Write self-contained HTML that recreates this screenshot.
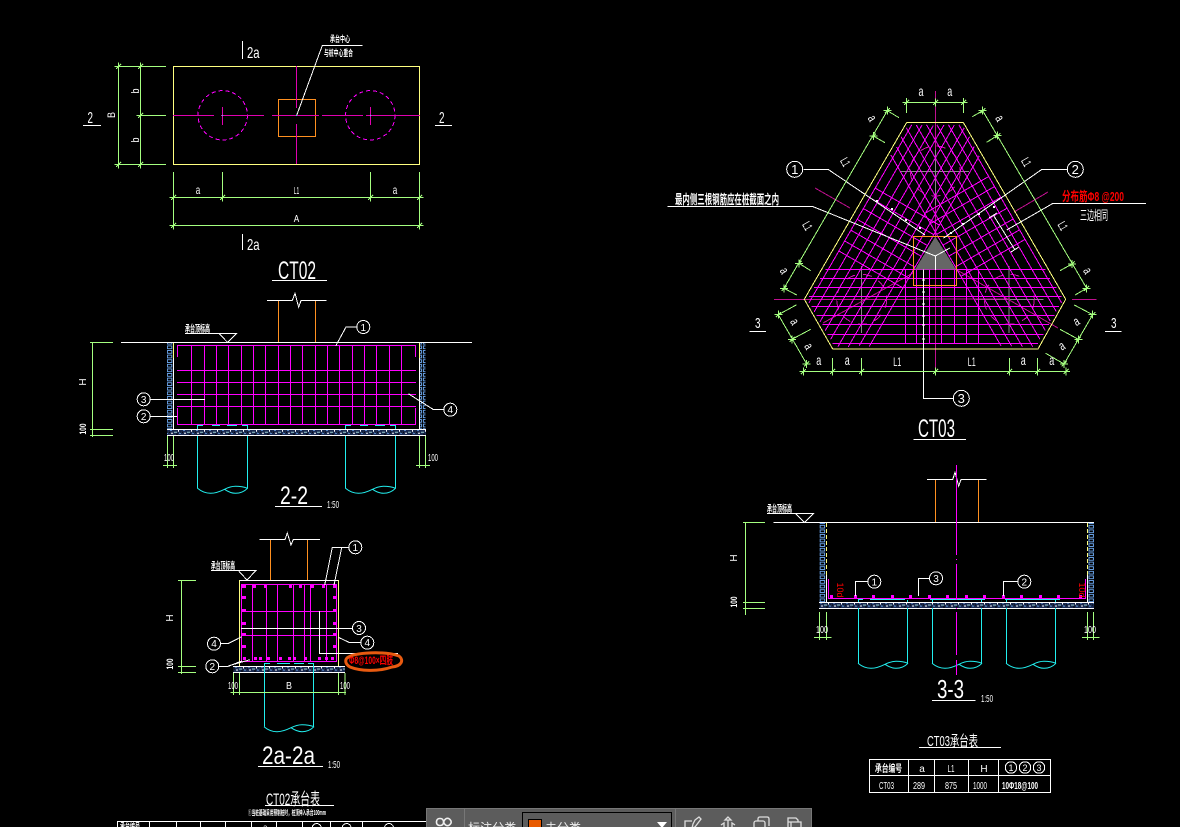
<!DOCTYPE html>
<html lang="zh"><head><meta charset="utf-8"><title>CT02 CT03</title>
<style>
html,body{margin:0;padding:0;background:#000;width:1180px;height:827px;overflow:hidden}
svg{position:absolute;left:0;top:0;display:block}
.t{fill:#fff;font-family:"Liberation Sans","Noto Sans CJK SC",sans-serif;stroke:none}
.c{fill:#fff;font-family:"Liberation Sans","Noto Sans CJK SC",sans-serif;font-weight:bold;stroke:none}
.r{fill:#f00}
.m{text-anchor:middle}
#tb{position:absolute;left:426px;top:808px;width:386px;height:19px;background:#5c5c5c;border:1px solid #777;border-bottom:0;box-sizing:border-box;overflow:hidden;font:14px "Liberation Sans","Noto Sans CJK SC",sans-serif;color:#eee}
#tb div,#tb span,#tb svg{position:absolute}
</style></head><body>
<svg width="1180" height="827" viewBox="0 0 1180 827" fill="none" stroke-width="1" shape-rendering="crispEdges">
<defs>
<path id="k" d="M-4 0H4M0-4V4M-2.5 2.5L2.5-2.5" stroke="#a5ff80"/>
<path id="wv" d="M0 0Q6 5 13 5Q19 5 27 1Q33-2 38-2Q45-2 50 0M27 1Q33 5 38 5Q45 5 50 0" stroke="#2ee" shape-rendering="auto"/>
<pattern id="bk" width="6.4" height="4.6" patternUnits="userSpaceOnUse"><rect width="6.4" height="4.6" fill="#000"/><rect x=".8" y=".8" width="4.4" height="3" fill="none" stroke="#6aa4ea"/></pattern>
<pattern id="gr" width="13" height="6.4" patternUnits="userSpaceOnUse"><rect width="13" height="6.4" fill="#1a2a50"/><rect x="1" y="1" width="2" height="1" fill="#6aa4ea"/><rect x="5" y="3" width="3" height="1" fill="#9cc"/><rect x="9" y="1" width="1" height="2" fill="#fff"/><rect x="2" y="4" width="2" height="1" fill="#fff"/><rect x="10" y="4" width="2" height="1" fill="#6aa4ea"/><rect x="6" y="0" width="1" height="1" fill="#000"/><rect x="0" y="3" width="1" height="1" fill="#000"/><rect x="11" y="3" width="1" height="1" fill="#000"/><rect x="7" y="5" width="2" height="1" fill="#000"/></pattern>
<g id="rb">
<path stroke="#f0f" d="M825.7 269.5H1045.7M820 278.5H1050M814 287.5H1056.7M809 296.5H1061.7M811.7 306.5H1059M816.7 315.5H1054.3M822.3 324.5H1049M827.7 334.5H1043.3M832.7 343.5H1038"/>
<path stroke="#f0f" d="M905.7 269V343M916.7 269V343M929.3 269V343M941.7 269V343M954.3 269V343M966.7 269V343M978.3 269V343"/>
</g>
<g id="px">
<path stroke="#888" d="M827.7 299.5H895.7M861.5 266V333"/>
<circle cx="861.7" cy="299.3" r="25" stroke="#d010b0" stroke-dasharray="9 8"/>
</g>
</defs>

<!-- CT02 plan -->
<rect x="173.5" y="66.5" width="246" height="98" stroke="#ffff80"/>
<circle cx="222.7" cy="115.3" r="24.7" stroke="#f0f" stroke-dasharray="4 3"/>
<circle cx="370.3" cy="115.3" r="24.7" stroke="#f0f" stroke-dasharray="4 3"/>
<rect x="278.5" y="99.5" width="37" height="37" stroke="#ff9020"/>
<path stroke="#e000b0" d="M296.5 66V108M296.5 124V164M173 115.5H214M221 115.5H264M272 115.5H319M322 115.5H363M366 115.5H420M222.5 107V125M370.5 107V125"/>
<path stroke="#fff" d="M296.7 115.3L322.3 45.5H362.7"/>
<rect x="222" y="115" width="1" height="1" fill="#2ee"/><rect x="370" y="115" width="1" height="1" fill="#2ee"/><rect x="296" y="115" width="1" height="1" fill="#2ee"/>
<text class="c" x="330" y="42" font-size="8.5" textLength="20" lengthAdjust="spacingAndGlyphs">承台中心</text>
<text class="c" x="324" y="56" font-size="8.5" textLength="29" lengthAdjust="spacingAndGlyphs">与桩中心重合</text>
<path stroke="#a5ff80" d="M118.5 64V167M140.5 64V167M115 66.5H166M115 164.5H166M140 115.5H166M170 197.5H422M170 225.5H422M173.5 172V228M222.5 172V200M370.5 172V200M419.5 172V228"/>
<g><use href="#k" x="118.5" y="66.5"/><use href="#k" x="140.5" y="66.5"/><use href="#k" x="118.5" y="164.5"/><use href="#k" x="140.5" y="164.5"/><use href="#k" x="140.5" y="115.5"/><use href="#k" x="173.5" y="197.5"/><use href="#k" x="222.5" y="197.5"/><use href="#k" x="370.5" y="197.5"/><use href="#k" x="419.5" y="197.5"/><use href="#k" x="173.5" y="225.5"/><use href="#k" x="419.5" y="225.5"/></g>
<path stroke="#fff" d="M242.5 41V59M242.5 234V250M83 125.5H101M435 125.5H452"/>
<text class="t" x="247" y="58" font-size="16" textLength="12.6" lengthAdjust="spacingAndGlyphs">2a</text>
<text class="t" x="247" y="250" font-size="16" textLength="12.6" lengthAdjust="spacingAndGlyphs">2a</text>
<text class="t" x="87.5" y="123" font-size="16" textLength="5.5" lengthAdjust="spacingAndGlyphs">2</text>
<text class="t" x="439" y="123" font-size="16" textLength="5.5" lengthAdjust="spacingAndGlyphs">2</text>
<text class="t m" x="111" y="119" font-size="11" textLength="6" lengthAdjust="spacingAndGlyphs" transform="rotate(-90 111 115)">B</text>
<text class="t m" x="136" y="94" font-size="11" textLength="5" lengthAdjust="spacingAndGlyphs" transform="rotate(-90 136 91)">b</text>
<text class="t m" x="136" y="143" font-size="11" textLength="5" lengthAdjust="spacingAndGlyphs" transform="rotate(-90 136 140)">b</text>
<text class="t m" x="198" y="194" font-size="12" textLength="4.5" lengthAdjust="spacingAndGlyphs">a</text>
<text class="t m" x="296.5" y="194" font-size="10" textLength="5.5" lengthAdjust="spacingAndGlyphs">L1</text>
<text class="t m" x="395" y="194" font-size="12" textLength="4.5" lengthAdjust="spacingAndGlyphs">a</text>
<text class="t m" x="296.5" y="222" font-size="10" textLength="5.5" lengthAdjust="spacingAndGlyphs">A</text>
<text class="t" x="278" y="279" font-size="25" textLength="38" lengthAdjust="spacingAndGlyphs">CT02</text>
<path stroke="#fff" d="M272 280.5H327"/>

<!-- 2-2 -->
<path stroke="#ff9020" d="M278.5 300V342M315.5 300V342"/>
<path stroke="#fff" d="M267 300.5H292.3L295 293.3L298.7 307.3L301 300.5H326.7M121 342.5H472M185 333.5H236.7L227.7 342.5L219 333.5"/>
<text class="c" x="185" y="332" font-size="9.5" textLength="25" lengthAdjust="spacingAndGlyphs">承台顶标高</text>
<rect x="167" y="343" width="6" height="86" fill="url(#bk)"/><rect x="419.5" y="343" width="6" height="86" fill="url(#bk)"/>
<path stroke="#fff" d="M173.5 358V435M419.5 358V435"/><path stroke="#ffff80" d="M173.5 343V358M419.5 343V358"/>
<rect x="167" y="429" width="259" height="6" fill="url(#gr)"/>
<path stroke="#fff" d="M167 429.5H426M167 435.5H426"/>
<path stroke="#f0f" d="M177.5 345.5H415.5M177.5 424.5H415.5M177.5 345V357M177.5 408V425M415.5 345V357M415.5 408V425M177 370.5H416M177 382.5H416M177 394.5H416M177 406.5H416"/>
<path stroke="#f0f" d="M191.5 345V424M204.5 345V424M216.5 345V424M228.5 345V424M241.5 345V424M253.5 345V424M265.5 345V424M278.5 345V424M290.5 345V424M302.5 345V424M315.5 345V424M327.5 345V424M339.5 345V424M352.5 345V424M364.5 345V424M376.5 345V424M389.5 345V424M401.5 345V424"/>
<path stroke="#2ee" d="M197.5 429V425.5H203M212 425.5H220M227 425.5H237M242 425.5H247.5V429M345.5 429V425.5H351M360 425.5H368M375 425.5H385M390 425.5H395.5V429M197.5 436V488.3M247.5 436V488.3M345.5 436V488.3M395.5 436V488.3"/>
<use href="#wv" x="197.5" y="488.3"/><use href="#wv" x="345.5" y="488.3"/>
<circle cx="363.3" cy="327" r="6.5" stroke="#fff"/><path stroke="#fff" d="M356.7 327H346L335.7 346"/>
<circle cx="143.7" cy="399.3" r="6.5" stroke="#fff"/><path stroke="#fff" d="M150 399.5H205"/>
<circle cx="143.7" cy="416.3" r="6.5" stroke="#fff"/><path stroke="#fff" d="M150 416.5H177"/>
<circle cx="450.3" cy="409.7" r="6.5" stroke="#fff"/><path stroke="#fff" d="M444 409.5H433.3L408.3 393.7"/>
<text class="t m" x="363.3" y="331" font-size="10">1</text><text class="t m" x="143.7" y="403" font-size="10">3</text><text class="t m" x="143.7" y="420" font-size="10">2</text><text class="t m" x="450.3" y="413" font-size="10">4</text>
<path stroke="#a5ff80" d="M92.5 342V437M90 342.5H113M90 429.5H113M90 435.5H113M167.5 436V468M173.5 436V468M163 465.5H177M419.5 436V468M425.5 436V468M416 465.5H430"/>
<text class="t m" x="90" y="386" font-size="10" transform="rotate(-90 86 386)">H</text>
<text class="c m" x="89" y="432" font-size="9.5" transform="rotate(-90 86 432)" textLength="11" lengthAdjust="spacingAndGlyphs">100</text>
<text class="t" x="164" y="461" font-size="10" textLength="10" lengthAdjust="spacingAndGlyphs">100</text>
<text class="t" x="428" y="461" font-size="10" textLength="10" lengthAdjust="spacingAndGlyphs">100</text>
<text class="t" x="280" y="504" font-size="25" textLength="28" lengthAdjust="spacingAndGlyphs">2-2</text>
<path stroke="#fff" d="M275 506.5H322"/>
<text class="t" x="327" y="508" font-size="10" textLength="12" lengthAdjust="spacingAndGlyphs">1:50</text>

<!-- 2a-2a -->
<path stroke="#ff9020" d="M270.5 539V580M307.5 539V580"/>
<path stroke="#fff" d="M259.3 539.5H285L287.3 533L291 545L293.3 539.5H320M239.5 580.5H338.5M211 570.5H256L247 580L238.3 570.5"/>
<text class="c" x="211" y="569" font-size="9.5" textLength="24" lengthAdjust="spacingAndGlyphs">承台顶标高</text>
<path stroke="#ffff80" d="M239.5 580V666M338.5 580V666"/>
<path stroke="#f0f" d="M241.5 584.5H336.5M241.5 661.5H336.5M241.5 584V662M336.5 584V662M252.5 584V661M266.5 584V661M277.5 584V661M293.5 584V661M304.5 584V661M310.5 584V661M326.5 584V661M241 611.5H337M241 635.5H337"/>
<path fill="#f0f" d="M242 585h4v3h-4zM253 585h3v3h-3zM264 585h3v3h-3zM289 585h3v3h-3zM299 585h3v3h-3zM311 585h3v3h-3zM322 585h3v3h-3zM333 585h3v3h-3zM243 657h3v3h-3zM254 657h3v3h-3zM259 657h3v3h-3zM267 657h3v3h-3zM279 657h3v3h-3zM288 657h3v3h-3zM293 657h3v3h-3zM304 657h3v3h-3zM318 657h3v3h-3zM325 657h3v3h-3zM331 657h3v3h-3zM242 596h4v3h-4zM242 609h4v3h-4zM242 622h4v3h-4zM242 633h4v3h-4zM242 645h4v3h-4zM333 596h4v3h-4zM333 609h4v3h-4zM333 622h4v3h-4zM333 633h4v3h-4zM333 645h4v3h-4z"/>
<path stroke="#fff" d="M241 628.5H353M319.5 611V653.5H398"/>
<circle cx="355.3" cy="547.3" r="6.5" stroke="#fff"/><path stroke="#fff" d="M349 547.5H332.3L324.7 585M341.7 547.5L334 585"/>
<circle cx="359" cy="628" r="6.5" stroke="#fff"/>
<circle cx="367.3" cy="642.7" r="6.5" stroke="#fff"/><path stroke="#fff" d="M361 642.5H349.3L338.3 637.3"/>
<circle cx="214" cy="643.7" r="6.5" stroke="#fff"/><path stroke="#fff" d="M220.7 643.5H228.3L241.7 636.7"/>
<circle cx="212.3" cy="666.3" r="6.5" stroke="#fff"/><path stroke="#fff" d="M218 666.5H228L241.7 661M228 666L250 659.7"/>
<text class="t m" x="355.3" y="551" font-size="10">1</text><text class="t m" x="359" y="632" font-size="10">3</text><text class="t m" x="367.3" y="646" font-size="10">4</text><text class="t m" x="214" y="647" font-size="10">4</text><text class="t m" x="212.3" y="670" font-size="10">2</text>
<rect x="233.3" y="666.3" width="111.7" height="6.4" fill="url(#gr)"/>
<path stroke="#fff" d="M233 666.5H345M233 672.5H345"/>
<path stroke="#2ee" d="M264.5 673V663.5H270M277 663.5H290M294 663.5H304M308 663.5H313.5V673M264.5 673V726.7M313.5 673V726.7"/>
<use href="#wv" x="264" y="726.7"/>
<path stroke="#a5ff80" d="M181.5 580V674M178 580.5H196M178 666.5H196M178 672.5H196M230.7 692.5H346M233.5 673V695M239.5 673V695M338.5 673V695M345 673V695"/>
<text class="t m" x="177" y="622" font-size="10" transform="rotate(-90 173 622)">H</text>
<text class="c m" x="177" y="668" font-size="9.5" transform="rotate(-90 173 668)" textLength="11" lengthAdjust="spacingAndGlyphs">100</text>
<text class="t" x="228" y="689" font-size="10" textLength="10" lengthAdjust="spacingAndGlyphs">100</text>
<text class="t" x="340" y="689" font-size="10" textLength="10" lengthAdjust="spacingAndGlyphs">100</text>
<text class="t m" x="289" y="689" font-size="10" textLength="6" lengthAdjust="spacingAndGlyphs">B</text>
<text class="t" x="262" y="764" font-size="25" textLength="53" lengthAdjust="spacingAndGlyphs">2a-2a</text>
<path stroke="#fff" d="M258 766.5H323"/>
<text class="t" x="328" y="768" font-size="10" textLength="12" lengthAdjust="spacingAndGlyphs">1:50</text>
<path d="M347 658C355 652 385 651 399 656C404 660 402 666 392 667C378 672 360 671 350 667C345 664 345 660 347 658Z" stroke="#e85a10" stroke-width="3" shape-rendering="auto"/>
<text class="c r" x="349" y="664" font-size="11" textLength="44" lengthAdjust="spacingAndGlyphs">Φ8@100×四肢</text>

<!-- CT02 table -->
<text class="t" x="266" y="805" font-size="17" textLength="54" lengthAdjust="spacingAndGlyphs">CT02承台表</text>
<path stroke="#fff" d="M265 805.5H334"/>
<text class="c" x="248" y="815" font-size="7" textLength="78" lengthAdjust="spacingAndGlyphs">①当桩基础采用预制桩时，桩顶伸入承台100mm</text>
<path stroke="#fff" d="M117 821.5H427M117.5 822V827M149.5 822V827M176.5 822V827M200.5 822V827M225.5 822V827M251.5 822V827M276.5 822V827M302.5 822V827M330.5 822V827M362.5 822V827"/>
<circle cx="316.7" cy="828" r="4.5" stroke="#fff"/><circle cx="346.6" cy="828" r="4.5" stroke="#fff"/><circle cx="389" cy="828" r="4.5" stroke="#fff"/>
<text class="c" x="120" y="829" font-size="8" textLength="20" lengthAdjust="spacingAndGlyphs">承台编号</text>
<text class="t" x="263" y="830" font-size="8">a</text>

<!-- CT03 plan -->
<path stroke="#c01090" d="M935.5 91V373"/>
<use href="#px"/>
<g transform="translate(147.6 0)"><use href="#px"/></g>
<path stroke="#888" d="M901 171.5H969M935.5 150V205"/><circle cx="935.3" cy="171" r="25" stroke="#d010b0" stroke-dasharray="9 8"/>
<path stroke="#c01090" d="M774 299.5H915M1072 299.5H1096.7M815 188L850 208M1014 212L1048 192M823 323L913 273M957 270L1058 328M915 299H1010"/>
<use href="#rb"/>
<use href="#rb" transform="rotate(120 935.3 257)"/>
<use href="#rb" transform="rotate(240 935.3 257)"/>
<path fill="#666" d="M935.3 236.7L956 269.3H915Z"/>
<rect x="913.5" y="236.5" width="43" height="49" stroke="#ff9020"/>
<path stroke="#ffff80" d="M906.7 122.5H963.3L1065.7 299.3L1038 349H832.7L804.3 299.3Z" stroke-linejoin="miter"/>
<path stroke="#fff" d="M803.3 169.5H828.3L925 235M1067.3 169.5H1041.7L943.3 238.3M667.3 206.5H812.7L935.3 256M1052.7 203.5H1146M1052.7 203.5L1006.7 230M993.3 215L1015 250M989 218L997 213M1011 252L1019 247M935.5 256V270M935.3 256L950 248M923.5 269.3V398.5H953.3"/>
<path fill="#fff" d="M876 200h2v2h-2zM891 208h2v2h-2zM905 219h2v2h-2zM919 227h2v2h-2zM993 206h2v2h-2zM978 213h2v2h-2zM962 223h2v2h-2zM950 232h2v2h-2zM922.5 279h2v2h-2zM922.5 291h2v2h-2zM922.5 303h2v2h-2zM922.5 315h2v2h-2zM922.5 324h2v2h-2zM922.5 338h2v2h-2z"/>
<circle cx="794.7" cy="169.3" r="8" stroke="#fff"/><circle cx="1075.3" cy="169.3" r="8" stroke="#fff"/><circle cx="961.3" cy="398.3" r="8" stroke="#fff"/>
<text class="t m" x="794.7" y="174" font-size="13">1</text><text class="t m" x="1075.3" y="174" font-size="13">2</text><text class="t m" x="961.3" y="403" font-size="13">3</text>
<text class="c" x="675" y="204" font-size="13" textLength="104" lengthAdjust="spacingAndGlyphs">最内侧三根钢筋应在桩截面之内</text>
<text class="c r" x="1062" y="201" font-size="13" textLength="62" lengthAdjust="spacingAndGlyphs">分布筋Φ8 @200</text>
<text class="t" x="1080" y="220" font-size="13" textLength="28" lengthAdjust="spacingAndGlyphs">三边相同</text>
<path stroke="#a5ff80" d="M803.3 371.5H1067.3M832.5 358V374M861.5 358V374M1009.5 358V374M1037.5 358V374M902.3 102.5H967.3M906.5 98V113M963.5 98V113M784 288.3L887.3 110.7M873.3 136L885 142.7M887.3 110.7L899 117.7M799 263.3L810.7 270.7M784 288.3L796.7 295M982.7 110.7L1086.7 288.3M982.7 110.7L972.3 116.7M997 135.7L986.7 142.3M1072 264L1060 270.7M1086.7 288.3L1075 295M778.3 314.7L806.7 364M778.3 314.7L796.7 304.7M792 339.3L810.7 329.3M1092.7 314.7L1064 364M1092.7 314.7L1074.3 305M1078.3 339.3L1060 329.3M1064 364L1045.7 353.3"/>
<g><use href="#k" x="803.3" y="371.5"/><use href="#k" x="832.5" y="371.5"/><use href="#k" x="861.5" y="371.5"/><use href="#k" x="935.5" y="371.5"/><use href="#k" x="1009.5" y="371.5"/><use href="#k" x="1037.5" y="371.5"/><use href="#k" x="1066" y="371.5"/><use href="#k" x="906.5" y="102.5"/><use href="#k" x="935.5" y="102.5"/><use href="#k" x="963.5" y="102.5"/><use href="#k" x="887.3" y="110.7"/><use href="#k" x="873.3" y="136"/><use href="#k" x="799" y="263.3"/><use href="#k" x="784" y="288.3"/><use href="#k" x="982.7" y="110.7"/><use href="#k" x="997.7" y="135.7"/><use href="#k" x="1072" y="264"/><use href="#k" x="1086.7" y="288.3"/><use href="#k" x="778.3" y="314.7"/><use href="#k" x="792" y="339.3"/><use href="#k" x="806.7" y="364"/><use href="#k" x="1092.7" y="314.7"/><use href="#k" x="1078.3" y="339.3"/><use href="#k" x="1064" y="364"/></g>
<g font-size="14">
<text class="t m" x="818.7" y="365" textLength="5" lengthAdjust="spacingAndGlyphs">a</text><text class="t m" x="847.3" y="365" textLength="5" lengthAdjust="spacingAndGlyphs">a</text><text class="t m" x="1023.3" y="365" textLength="5" lengthAdjust="spacingAndGlyphs">a</text><text class="t m" x="1051.7" y="365" textLength="5" lengthAdjust="spacingAndGlyphs">a</text>
<text class="t m" x="897.3" y="366" font-size="12" textLength="8" lengthAdjust="spacingAndGlyphs">L1</text><text class="t m" x="971.7" y="366" font-size="12" textLength="8" lengthAdjust="spacingAndGlyphs">L1</text>
<text class="t m" x="921" y="96" textLength="5" lengthAdjust="spacingAndGlyphs">a</text><text class="t m" x="949.7" y="96" textLength="5" lengthAdjust="spacingAndGlyphs">a</text>
<text class="t m" x="871.7" y="122" font-size="13" textLength="5" lengthAdjust="spacingAndGlyphs" transform="rotate(60 871.7 118.5)">a</text>
<text class="t m" x="845" y="166" font-size="12" textLength="8" lengthAdjust="spacingAndGlyphs" transform="rotate(60 845 162.3)">L1</text>
<text class="t m" x="807.3" y="230" font-size="12" textLength="8" lengthAdjust="spacingAndGlyphs" transform="rotate(60 807.3 226)">L1</text>
<text class="t m" x="783.7" y="274.5" font-size="13" textLength="5" lengthAdjust="spacingAndGlyphs" transform="rotate(60 783.7 271)">a</text>
<text class="t m" x="999" y="122" font-size="13" textLength="5" lengthAdjust="spacingAndGlyphs" transform="rotate(60 999 118.7)">a</text>
<text class="t m" x="1026" y="166" font-size="12" textLength="8" lengthAdjust="spacingAndGlyphs" transform="rotate(60 1026 162.3)">L1</text>
<text class="t m" x="1062.7" y="230" font-size="12" textLength="8" lengthAdjust="spacingAndGlyphs" transform="rotate(60 1062.7 226)">L1</text>
<text class="t m" x="1087" y="274.5" font-size="13" textLength="5" lengthAdjust="spacingAndGlyphs" transform="rotate(60 1087 271)">a</text>
<text class="t m" x="794" y="325.5" font-size="13" textLength="5" lengthAdjust="spacingAndGlyphs" transform="rotate(60 794 322)">a</text>
<text class="t m" x="808" y="350" font-size="13" textLength="5" lengthAdjust="spacingAndGlyphs" transform="rotate(60 808 346.7)">a</text>
<text class="t m" x="1076.7" y="325.5" font-size="13" textLength="5" lengthAdjust="spacingAndGlyphs" transform="rotate(-30 1076.7 322)">a</text>
<text class="t m" x="1062.3" y="350" font-size="13" textLength="5" lengthAdjust="spacingAndGlyphs" transform="rotate(-30 1062.3 346.7)">a</text>
</g>
<text class="t" x="755" y="328" font-size="15" textLength="5.5" lengthAdjust="spacingAndGlyphs">3</text>
<text class="t" x="1111" y="328" font-size="15" textLength="5.5" lengthAdjust="spacingAndGlyphs">3</text>
<path stroke="#fff" d="M749.3 331.5H766M1105 331.5H1121.7M913.3 439.5H966"/>
<text class="t" x="918" y="437" font-size="25" textLength="37" lengthAdjust="spacingAndGlyphs">CT03</text>

<!-- 3-3 -->
<path stroke="#ff9020" d="M935.5 479V522M978.5 479V522"/>
<path stroke="#fff" d="M927 479.5H952.7L955 472.3L958.7 486L961 479.5H986.7M773.3 522.5H1094M767 513.5H813.7L804.7 522.5L795.7 513.5"/>
<text class="c" x="767" y="512" font-size="9.5" textLength="25" lengthAdjust="spacingAndGlyphs">承台顶标高</text>
<rect x="819.5" y="523" width="6.4" height="79" fill="url(#bk)"/><rect x="1087.5" y="523" width="6.4" height="79" fill="url(#bk)"/>
<path stroke="#ffff80" stroke-dasharray="4 2" d="M826.5 523V602M1087.5 523V602"/>
<path stroke="#fff" d="M826.5 575V608M1087.5 575V608"/>
<rect x="819.3" y="602.3" width="274.7" height="6" fill="url(#gr)"/>
<path stroke="#fff" d="M819 602.5H1094M819 608.5H1094"/>
<path stroke="#2ee" d="M858.5 608V663.3M907.5 608V663.3M932.5 608V663.3M981.5 608V663.3M1006.5 608V663.3M1055.5 608V663.3M858 599.5H863M870 599.5H905M930 599.5H985M1005 599.5H1060M858.5 600V602M907.5 600V602M932.5 600V602M981.5 600V602M1006.5 600V602M1055.5 600V602"/>
<use href="#wv" x="858" y="663.3"/><use href="#wv" x="932" y="663.3"/><use href="#wv" x="1006" y="663.3"/>
<path stroke="#f0f" d="M956.5 465V555M956.5 559V560M956.5 564V600M956.5 608V609M956.5 612V655M956.5 660V675"/>
<path stroke="#f0f" d="M828.5 579V598.5H1085.5V579"/>
<path fill="#f0f" d="M830 595h3v3h-3zM854 595h3v3h-3zM872 595h3v3h-3zM891 595h3v3h-3zM909 595h3v3h-3zM928 595h3v3h-3zM946 595h3v3h-3zM965 595h3v3h-3zM983 595h3v3h-3zM1002 595h3v3h-3zM1020 595h3v3h-3zM1039 595h3v3h-3zM1057 595h3v3h-3zM1079 595h3v3h-3z"/>
<circle cx="874.3" cy="581.7" r="6.5" stroke="#fff"/><path stroke="#fff" d="M868 581.5H855.5V596"/>
<circle cx="936" cy="578.3" r="6.5" stroke="#fff"/><path stroke="#fff" d="M929.5 578.5H918.5V596"/>
<circle cx="1024.3" cy="581.7" r="6.5" stroke="#fff"/><path stroke="#fff" d="M1017.7 581.5H1003.5V596"/>
<text class="t m" x="874.3" y="585.5" font-size="10">1</text><text class="t m" x="936" y="582" font-size="10">3</text><text class="t m" x="1024.3" y="585.5" font-size="10">2</text>
<text class="t r m" x="840" y="587" font-size="9" transform="rotate(90 837 587)" style="fill:#f00">10d</text>
<text class="t r m" x="1082" y="587" font-size="9" transform="rotate(90 1079 587)" style="fill:#f00">10d</text>
<path stroke="#a5ff80" d="M745.5 522V615M743 522.5H765M743 602.5H765M743 608.5H765M819.5 612V640M826.5 612V640M814 637.5H831.7M1087.5 612V640M1093.5 612V640M1082 637.5H1099.3"/>
<text class="t m" x="741" y="562" font-size="10" transform="rotate(-90 737 562)">H</text>
<text class="c m" x="741" y="606" font-size="9.5" transform="rotate(-90 737 606)" textLength="11" lengthAdjust="spacingAndGlyphs">100</text>
<text class="t" x="816" y="633" font-size="10" textLength="12" lengthAdjust="spacingAndGlyphs">100</text>
<text class="t" x="1084" y="633" font-size="10" textLength="12" lengthAdjust="spacingAndGlyphs">100</text>
<text class="t" x="937" y="698" font-size="26" textLength="27" lengthAdjust="spacingAndGlyphs">3-3</text>
<path stroke="#fff" d="M932 700.5H975.7"/>
<text class="t" x="981" y="702" font-size="10" textLength="12" lengthAdjust="spacingAndGlyphs">1:50</text>

<!-- CT03 table -->
<text class="t" x="927" y="746" font-size="15" textLength="51" lengthAdjust="spacingAndGlyphs">CT03承台表</text>
<path stroke="#fff" d="M919 747.5H1001M869.5 759.5H1050.5M869.5 775.5H1050.5M869.5 792.5H1050.5M869.5 759V793M908.5 759V793M934.5 759V793M968.5 759V793M998.5 759V793M1050.5 759V793"/>
<g font-size="10">
<text class="c" x="875" y="772" textLength="27" lengthAdjust="spacingAndGlyphs">承台编号</text>
<text class="t m" x="922" y="772">a</text><text class="t m" x="951" y="772" textLength="7" lengthAdjust="spacingAndGlyphs">L1</text><text class="t m" x="984" y="772">H</text>
<text class="t" x="879" y="789" textLength="15" lengthAdjust="spacingAndGlyphs">CT03</text>
<text class="t m" x="919" y="789" textLength="12" lengthAdjust="spacingAndGlyphs">289</text>
<text class="t m" x="951" y="789" textLength="12" lengthAdjust="spacingAndGlyphs">875</text>
<text class="t m" x="980" y="789" textLength="14" lengthAdjust="spacingAndGlyphs">1000</text>
<text class="c" x="1002" y="789" textLength="36" lengthAdjust="spacingAndGlyphs">10Φ18@100</text>
<text class="t m" x="1011" y="771" font-size="9">1</text><text class="t m" x="1025" y="771" font-size="9">2</text><text class="t m" x="1039" y="771" font-size="9">3</text>
</g>
<circle cx="1011" cy="767.5" r="5.7" stroke="#fff"/><circle cx="1025" cy="767.5" r="5.7" stroke="#fff"/><circle cx="1039" cy="767.5" r="5.7" stroke="#fff"/>
</svg>

<div id="tb">
<svg style="left:8px;top:7px" width="20" height="14" viewBox="0 0 20 14" fill="none" stroke="#eee" stroke-width="1.6"><rect x="1.5" y="2.5" width="7" height="7" rx="3"/><rect x="9" y="2.5" width="7" height="7" rx="3" transform="rotate(45 12.5 6)"/></svg>
<div style="left:37px;top:0;width:1px;height:19px;background:#777"></div>
<span style="left:41px;top:10px;white-space:nowrap;font-size:12px;letter-spacing:.1px">标注分类</span>
<div style="left:95px;top:3px;width:150px;height:20px;border:1px solid #000;box-sizing:border-box"></div>
<div style="left:101px;top:10px;width:14px;height:14px;background:#e85a00;border:1px solid #000;box-sizing:border-box"></div>
<span style="left:118px;top:10px;white-space:nowrap;font-size:12px">未分类</span>
<svg style="left:230px;top:13px" width="10" height="6"><path d="M0 0H10L5 6Z" fill="#fff"/></svg>
<div style="left:248px;top:0;width:1px;height:19px;background:#777"></div>
<svg style="left:256px;top:7px" width="20" height="14" viewBox="0 0 20 14" fill="none" stroke="#ddd" stroke-width="1.3"><path d="M2 14V5H9M12 4L16 1L18 3L12 11L9 12L10 8Z"/></svg>
<svg style="left:292px;top:7px" width="20" height="14" viewBox="0 0 20 14" fill="none" stroke="#ddd" stroke-width="1.3"><path d="M9 1L6 4H12ZM9 4V12M2 9L5 7V14M16 9L13 7V14M3 12H15"/></svg>
<svg style="left:325px;top:7px" width="20" height="14" viewBox="0 0 20 14" fill="none" stroke="#ddd" stroke-width="1.3"><rect x="2" y="5" width="11" height="11" rx="2"/><path d="M6 5V3Q6 1 8 1H15Q17 1 17 3V10"/></svg>
<svg style="left:358px;top:7px" width="20" height="14" viewBox="0 0 20 14" fill="none" stroke="#ddd" stroke-width="1.3"><path d="M3 12V2H11L13 4V6M3 6H16V16H6V6"/></svg>
</div>
</body></html>
